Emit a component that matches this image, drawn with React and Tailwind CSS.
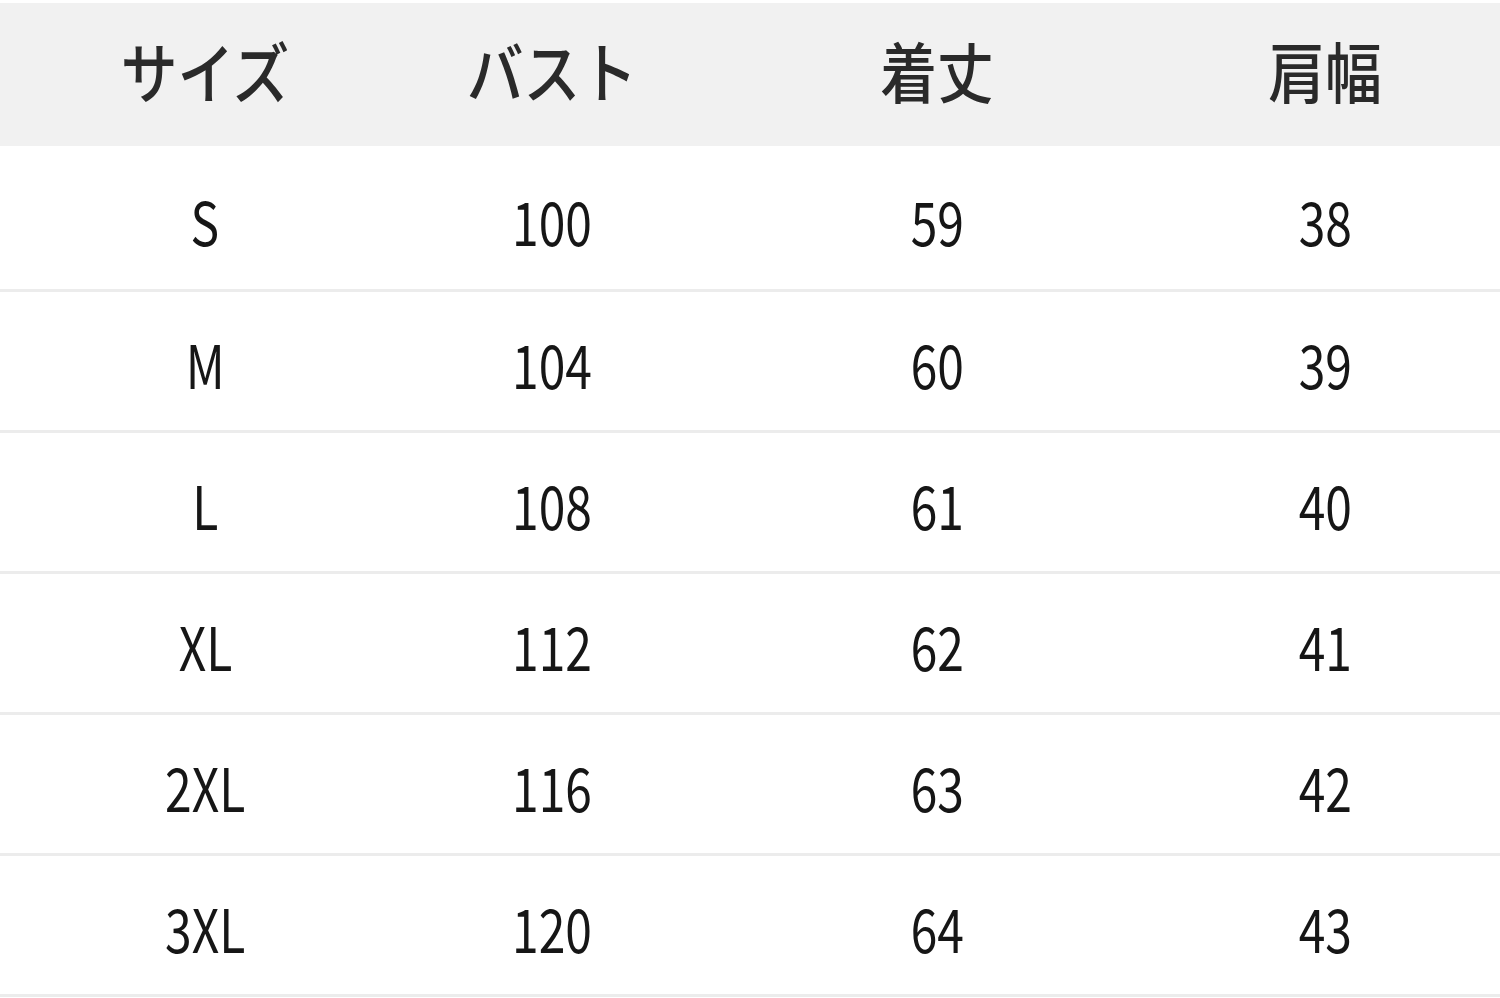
import React from 'react'

const rows = [
    ['S', '100', '59', '38'],
    ['M', '104', '60', '39'],
    ['L', '108', '61', '40'],
    ['XL', '112', '62', '41'],
    ['2XL', '116', '63', '42'],
    ['3XL', '120', '64', '43'],
]

const heads = ['サイズ', 'バスト', '着丈', '肩幅']

const font = { fontFamily: '"Noto Sans CJK JP", "Noto Sans", sans-serif' }

function Cell({ children, head }) {
    return (
        <div className="flex items-center justify-center">
            <span className={head ? "inline-block scale-x-[0.86] text-[66px] font-medium leading-none text-[#2a2a2a]" : "inline-block scale-x-[0.8] text-[60px] leading-none text-[#161616]"}>
                {children}
            </span>
        </div>
    )
}

export default function App() {
    return (
        <div className="w-[1500px] h-[998px] bg-white pt-[3px] overflow-hidden" style={font}>
            <div className="grid grid-cols-[410px_284px_486px_290px_1fr] h-[143px] pb-[12px] bg-[#f1f1f1]">
                {heads.map((h, i) => <Cell key={i} head>{h}</Cell>)}
                <div />
            </div>
            {rows.map((r, i) => (
                <div key={i} className={i === 0 ? "grid grid-cols-[410px_284px_486px_290px_1fr] h-[146px] border-b-[3px] border-[#ececec] pt-[4px]" : "grid grid-cols-[410px_284px_486px_290px_1fr] h-[141px] border-b-[3px] border-[#ececec] pt-[4px]"}>
                    {r.map((v, j) => <Cell key={j}>{v}</Cell>)}
                    <div />
                </div>
            ))}
        </div>
    )
}
